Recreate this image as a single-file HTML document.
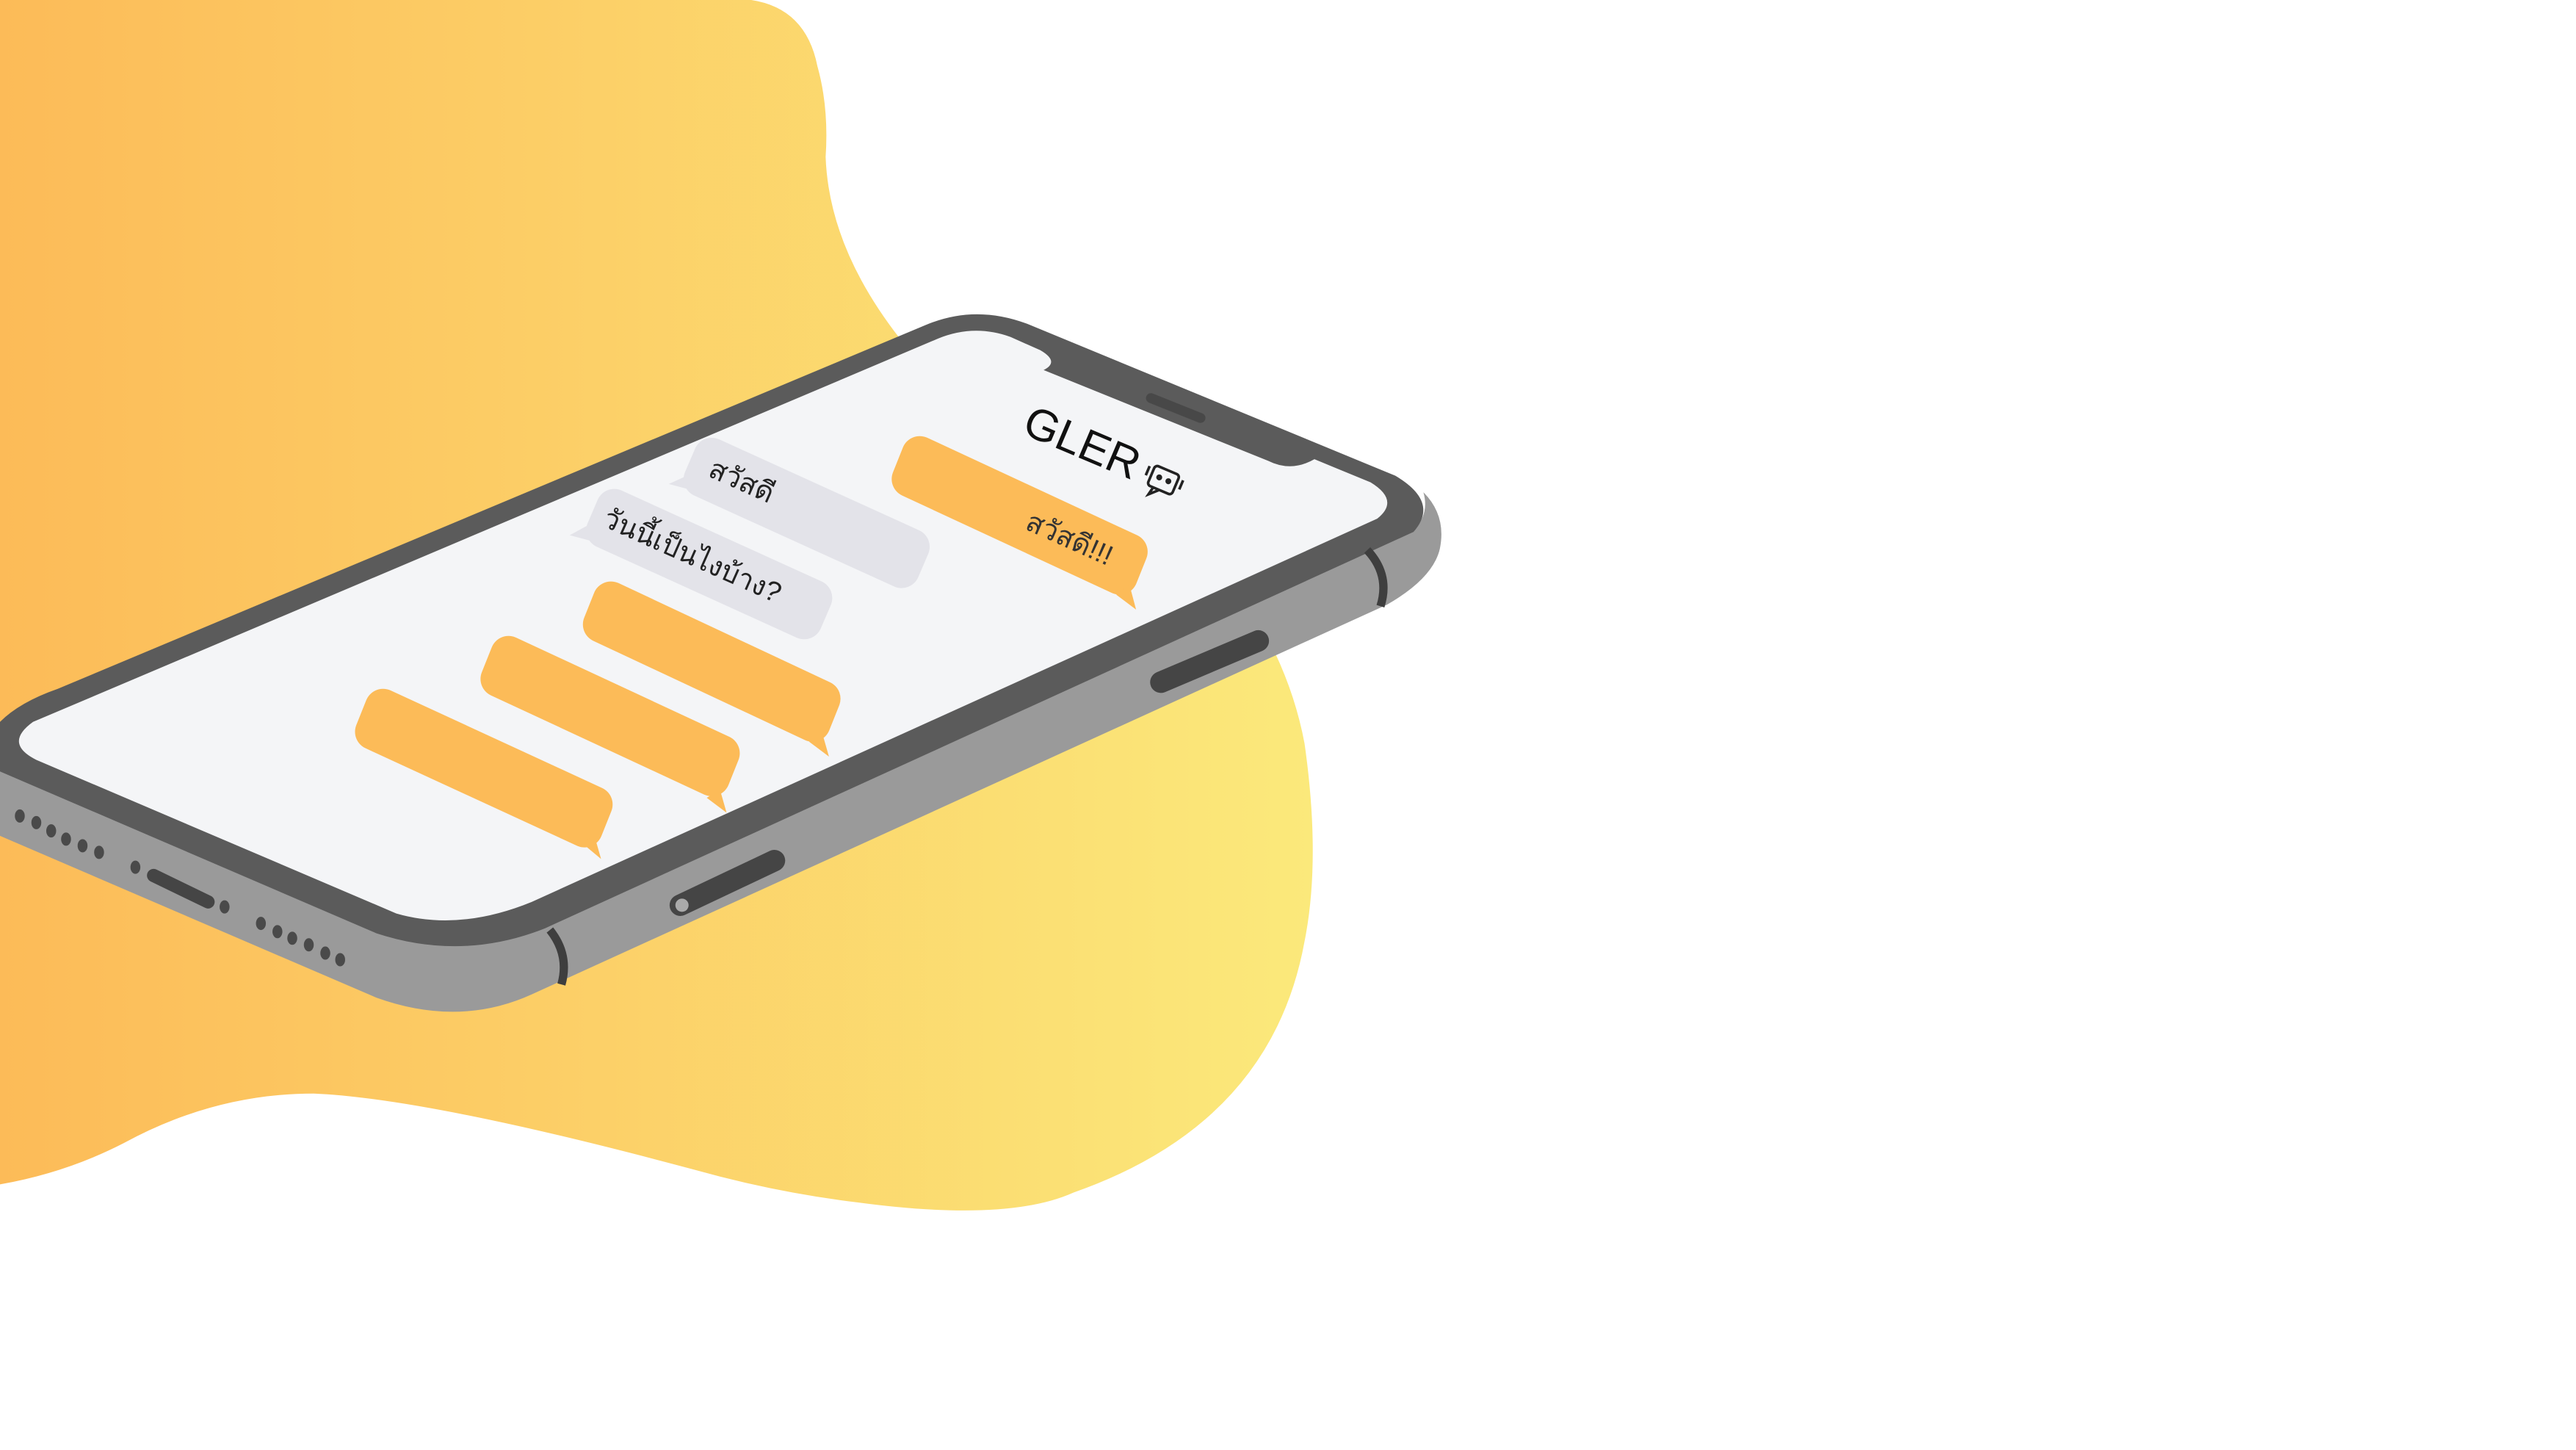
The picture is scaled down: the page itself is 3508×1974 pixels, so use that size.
<!DOCTYPE html>
<html><head><meta charset="utf-8"><style>
html,body{margin:0;padding:0;background:#fff;}
svg{display:block;}
text{font-family:"Liberation Sans","Noto Sans CJK SC",sans-serif;}
</style></head><body>
<svg width="3508" height="1974" viewBox="0 0 1560 877.8" xmlns="http://www.w3.org/2000/svg">
<defs>
<linearGradient id="g" x1="0" x2="1" y1="0" y2="0">
<stop offset="0" stop-color="#fcbb58"/><stop offset="1" stop-color="#fbe97b"/>
</linearGradient>
</defs>
<rect width="1560" height="878" fill="#fff"/>
<!-- blob -->
<path d="M0,0 L455,0 Q488,5 495,40 Q502,65 500,95 Q502,150 545,205 L700,300 Q775,370 790,450 Q800,520 790,570 Q770,680 650,722 Q610,740 520,728 Q470,722 420,708 Q260,665 190,662 Q130,662 75,692 Q40,710 0,717 Z" fill="url(#g)"/>
<!-- phone body side -->
<path d="M0,462 L230,565 Q280,580 330,560 L855,322 Q866,312 862,298 Q876,312 872,332 Q868,350 840,366 L322,602 Q278,622 228,604 L0,506 Z" fill="#9a9a9a"/>
<!-- bezel -->
<path d="M560,197 Q590,184 622,196 L845,288 Q872,304 856,322 L330,562 Q280,582 228,565 L0,467 L0,437 Q12,425 35,417 Z" fill="#5b5b5b"/>
<!-- screen -->
<path d="M568,205 Q590,196 612,204 L630,212 Q642,219 632,224 L768,279 Q782,286 796,278 L830,292 Q848,303 834,314 L322,546 Q278,564 240,553 L22,460 Q2,450 20,437 Z" fill="#f4f5f7"/>
<!-- notch speaker -->
<line x1="697" y1="241" x2="727" y2="253" stroke="#484848" stroke-width="6" stroke-linecap="round"/>
<!-- side lines -->
<path d="M333,563 Q345,578 340,596" stroke="#3e3e3e" stroke-width="5" fill="none"/>
<path d="M828,333 Q842,348 836,367" stroke="#3e3e3e" stroke-width="5" fill="none"/>
<!-- buttons -->
<line x1="703" y1="413" x2="762" y2="388" stroke="#454545" stroke-width="13" stroke-linecap="round"/>
<line x1="412" y1="548" x2="469" y2="521" stroke="#454545" stroke-width="13" stroke-linecap="round"/>
<circle cx="413" cy="548" r="4" fill="#aaa"/>
<line x1="93" y1="530" x2="126" y2="546" stroke="#454545" stroke-width="8" stroke-linecap="round"/>
<g fill="#4a4a4a">
<ellipse cx="12" cy="494" rx="3" ry="4"/><ellipse cx="22" cy="498" rx="3" ry="4"/><ellipse cx="31" cy="503" rx="3" ry="4"/><ellipse cx="40" cy="508" rx="3" ry="4"/><ellipse cx="50" cy="512" rx="3" ry="4"/><ellipse cx="60" cy="516" rx="3" ry="4"/>
<ellipse cx="82" cy="525" rx="3" ry="4"/><ellipse cx="136" cy="549" rx="3" ry="4"/>
<ellipse cx="158" cy="559" rx="3" ry="4"/><ellipse cx="168" cy="564" rx="3" ry="4"/><ellipse cx="177" cy="568" rx="3" ry="4"/><ellipse cx="187" cy="572" rx="3" ry="4"/><ellipse cx="197" cy="577" rx="3" ry="4"/><ellipse cx="206" cy="581" rx="3" ry="4"/>
</g>
<!-- bubbles -->
<g stroke-linejoin="round" stroke-width="22">
<polygon points="232,428 360,487 354,502 226,443" fill="#fcbb58" stroke="#fcbb58"/>
<polygon points="308,396 437,456 431,471 302,411" fill="#fcbb58" stroke="#fcbb58"/>
<polygon points="370,363 498,423 492,438 364,378" fill="#fcbb58" stroke="#fcbb58"/>
<polygon points="372,307 493,362 487,376 366,321" fill="#e3e3e9" stroke="#e3e3e9"/>
<polygon points="431,276 552,331 546,345 425,290" fill="#e3e3e9" stroke="#e3e3e9"/>
<polygon points="557,275 684,334 678,349 551,290" fill="#fcbb58" stroke="#fcbb58"/>
</g>
<g fill="#fcbb58">
<polygon points="352,510 364,520 360,506"/>
<polygon points="428,483 440,492 436,478"/>
<polygon points="490,449 502,458 498,444"/>
<polygon points="676,360 688,369 684,354"/>
</g>
<g fill="#e3e3e9">
<polygon points="356,318 345,324 360,328"/>
<polygon points="416,288 405,293 420,297"/>
</g>
<!-- text -->
<text x="618" y="262" font-size="27" fill="#111" transform="rotate(23 618 262)">GLER</text>
<g transform="translate(704,292) rotate(23)" fill="none" stroke="#222" stroke-width="1.6">
<rect x="-8" y="-8" width="16" height="13" rx="2"/>
<circle cx="-3" cy="-2" r="1" fill="#222"/><circle cx="3" cy="-2" r="1" fill="#222"/>
<path d="M-4,5 L-5,10 L0,5"/><path d="M-11,-6 v6 M11,-6 v6"/>
</g>
<text x="428" y="288" font-size="17" fill="#222" transform="rotate(24 428 288)">สวัสดี</text>
<text x="364" y="318" font-size="17" fill="#222" transform="rotate(24 364 318)">วันนี้เป็นไงบ้าง?</text>
<text x="620" y="320" font-size="17" fill="#333" transform="rotate(24 620 320)">สวัสดี!!!</text>
</svg>
</body></html>
